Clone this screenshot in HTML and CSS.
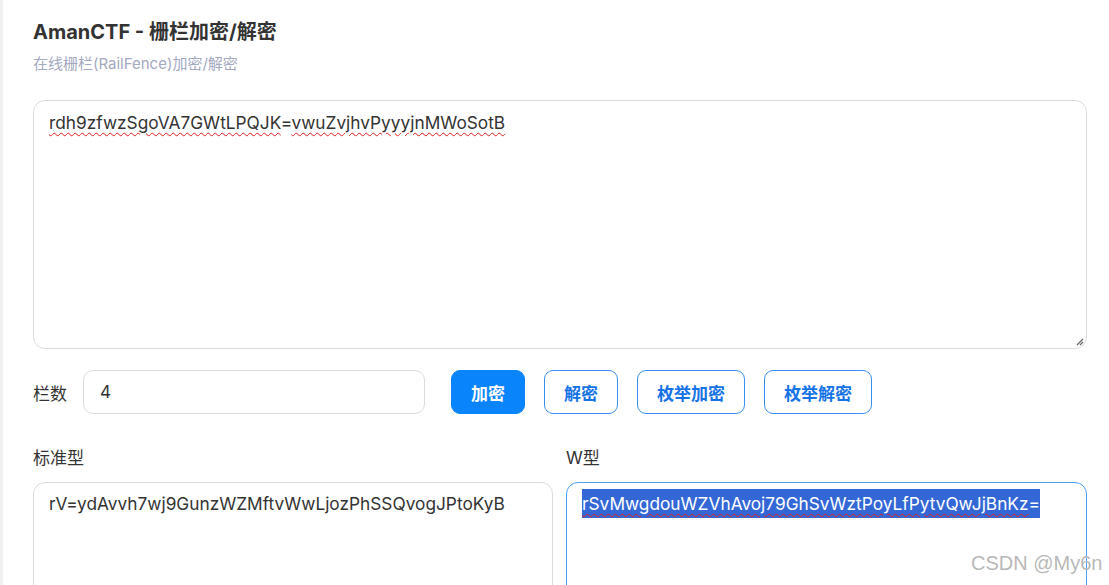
FILE: index.html
```html
<!DOCTYPE html>
<html lang="zh-CN">
<head>
<meta charset="utf-8">
<title>AmanCTF - 栅栏加密/解密</title>
<link rel="stylesheet" href="styles.css">
</head>
<body>
<div class="page">
  <h1 class="title">AmanCTF - 栅栏加密/解密</h1>
  <p class="subtitle">在线栅栏(RailFence)加密/解密</p>

  <div class="area area-main">
    <span class="sq">rdh9zfwzSgoVA7GWtLPQJK</span>=<span class="sq">vwuZvjhvPyyyjnMWoSotB</span>
    <svg class="grip" width="10" height="10" viewBox="0 0 10 10"><path d="M9 3 L3 9 M9 6 L6 9" stroke="#666" stroke-width="1.2" fill="none"/></svg>
  </div>

  <div class="controls">
    <label class="ctl-label">栏数</label>
    <div class="num-input">4</div>
    <div class="btns">
      <button class="btn btn-primary">加密</button>
      <button class="btn">解密</button>
      <button class="btn">枚举加密</button>
      <button class="btn">枚举解密</button>
    </div>
  </div>

  <div class="results">
    <div class="col">
      <div class="col-label">标准型</div>
      <div class="area area-out">rV=ydAvvh7wj9GunzWZMftvWwLjozPhSSQvogJPtoKyB</div>
    </div>
    <div class="col">
      <div class="col-label">W型</div>
      <div class="area area-out focused"><span class="sel"><span class="sq">rSvMwgdouWZVhAvoj79GhSvWztPoyLfPytvQwJjBnKz</span>=</span></div>
    </div>
  </div>
</div>
<div class="watermark">CSDN @My6n</div>
</body>
</html>
```

FILE: styles.css
```css
html, body {
  margin: 0;
  padding: 0;
  background: #ffffff;
  height: 100%;
  overflow: hidden;
}

body {
  font-family: Inter, "Noto Sans CJK SC", sans-serif;
  color: #333333;
  border-left: 3px solid #f0f0f0;
  box-sizing: border-box;
}

.page {
  padding: 20px 22px 0 30px;
}

.title {
  margin: 0;
  font-size: 20px;
  line-height: 24px;
  font-weight: 700;
  color: #333333;
}

.subtitle {
  margin: 10px 0 0;
  font-size: 15px;
  line-height: 20px;
  color: #a3a9bf;
}

.area {
  position: relative;
  box-sizing: border-box;
  border: 1px solid #dcdcdc;
  border-radius: 12px;
  padding: 10px 15px;
  font-size: 17.3px;
  line-height: 24px;
  color: #333333;
  background: #ffffff;
  white-space: nowrap;
}

.area-main {
  margin-top: 26px;
  height: 249px;
}

.sq {
  text-decoration: underline wavy #e02020;
  text-decoration-thickness: 1px;
  text-underline-offset: 3px;
}

.grip {
  position: absolute;
  right: 2px;
  bottom: 2px;
}

.controls {
  display: flex;
  align-items: center;
  margin-top: 21px;
}

.ctl-label {
  font-size: 17px;
  color: #333333;
  width: 50px;
}

.num-input {
  box-sizing: border-box;
  width: 342px;
  height: 44px;
  border: 1px solid #dcdcdc;
  border-radius: 10px;
  padding: 0 16px;
  display: flex;
  align-items: center;
  font-size: 17px;
  color: #333333;
}

.btns {
  display: flex;
  gap: 19px;
  margin-left: 26px;
}

.btn {
  box-sizing: border-box;
  height: 44px;
  padding: 0 19px;
  border: 1.5px solid #3a8ff2;
  border-radius: 9px;
  background: #ffffff;
  color: #1673e6;
  font-family: Inter, "Noto Sans CJK SC", sans-serif;
  font-size: 17px;
  font-weight: 700;
  cursor: pointer;
}

.btn-primary {
  background: #0a84fb;
  border-color: #0a84fb;
  color: #ffffff;
}

.results {
  display: grid;
  grid-template-columns: 520px 521px;
  gap: 13px;
  margin-top: 32px;
}

.col-label {
  font-size: 17px;
  line-height: 24px;
  color: #333333;
}

.area-out {
  margin-top: 12px;
  height: 160px;
  padding-top: 9px;
}

.focused {
  border: 1.5px solid #4aa0f5;
}

.sel {
  background: #3467d6;
  color: #ffffff;
  padding: 4px 0;
}

.watermark {
  position: absolute;
  left: 971px;
  top: 552px;
  font-family: "Liberation Sans", Arial, sans-serif;
  font-size: 20px;
  color: rgba(160, 160, 160, 0.75);
  text-shadow: 0 0 1px rgba(255,255,255,0.8);
  white-space: nowrap;
}
```
